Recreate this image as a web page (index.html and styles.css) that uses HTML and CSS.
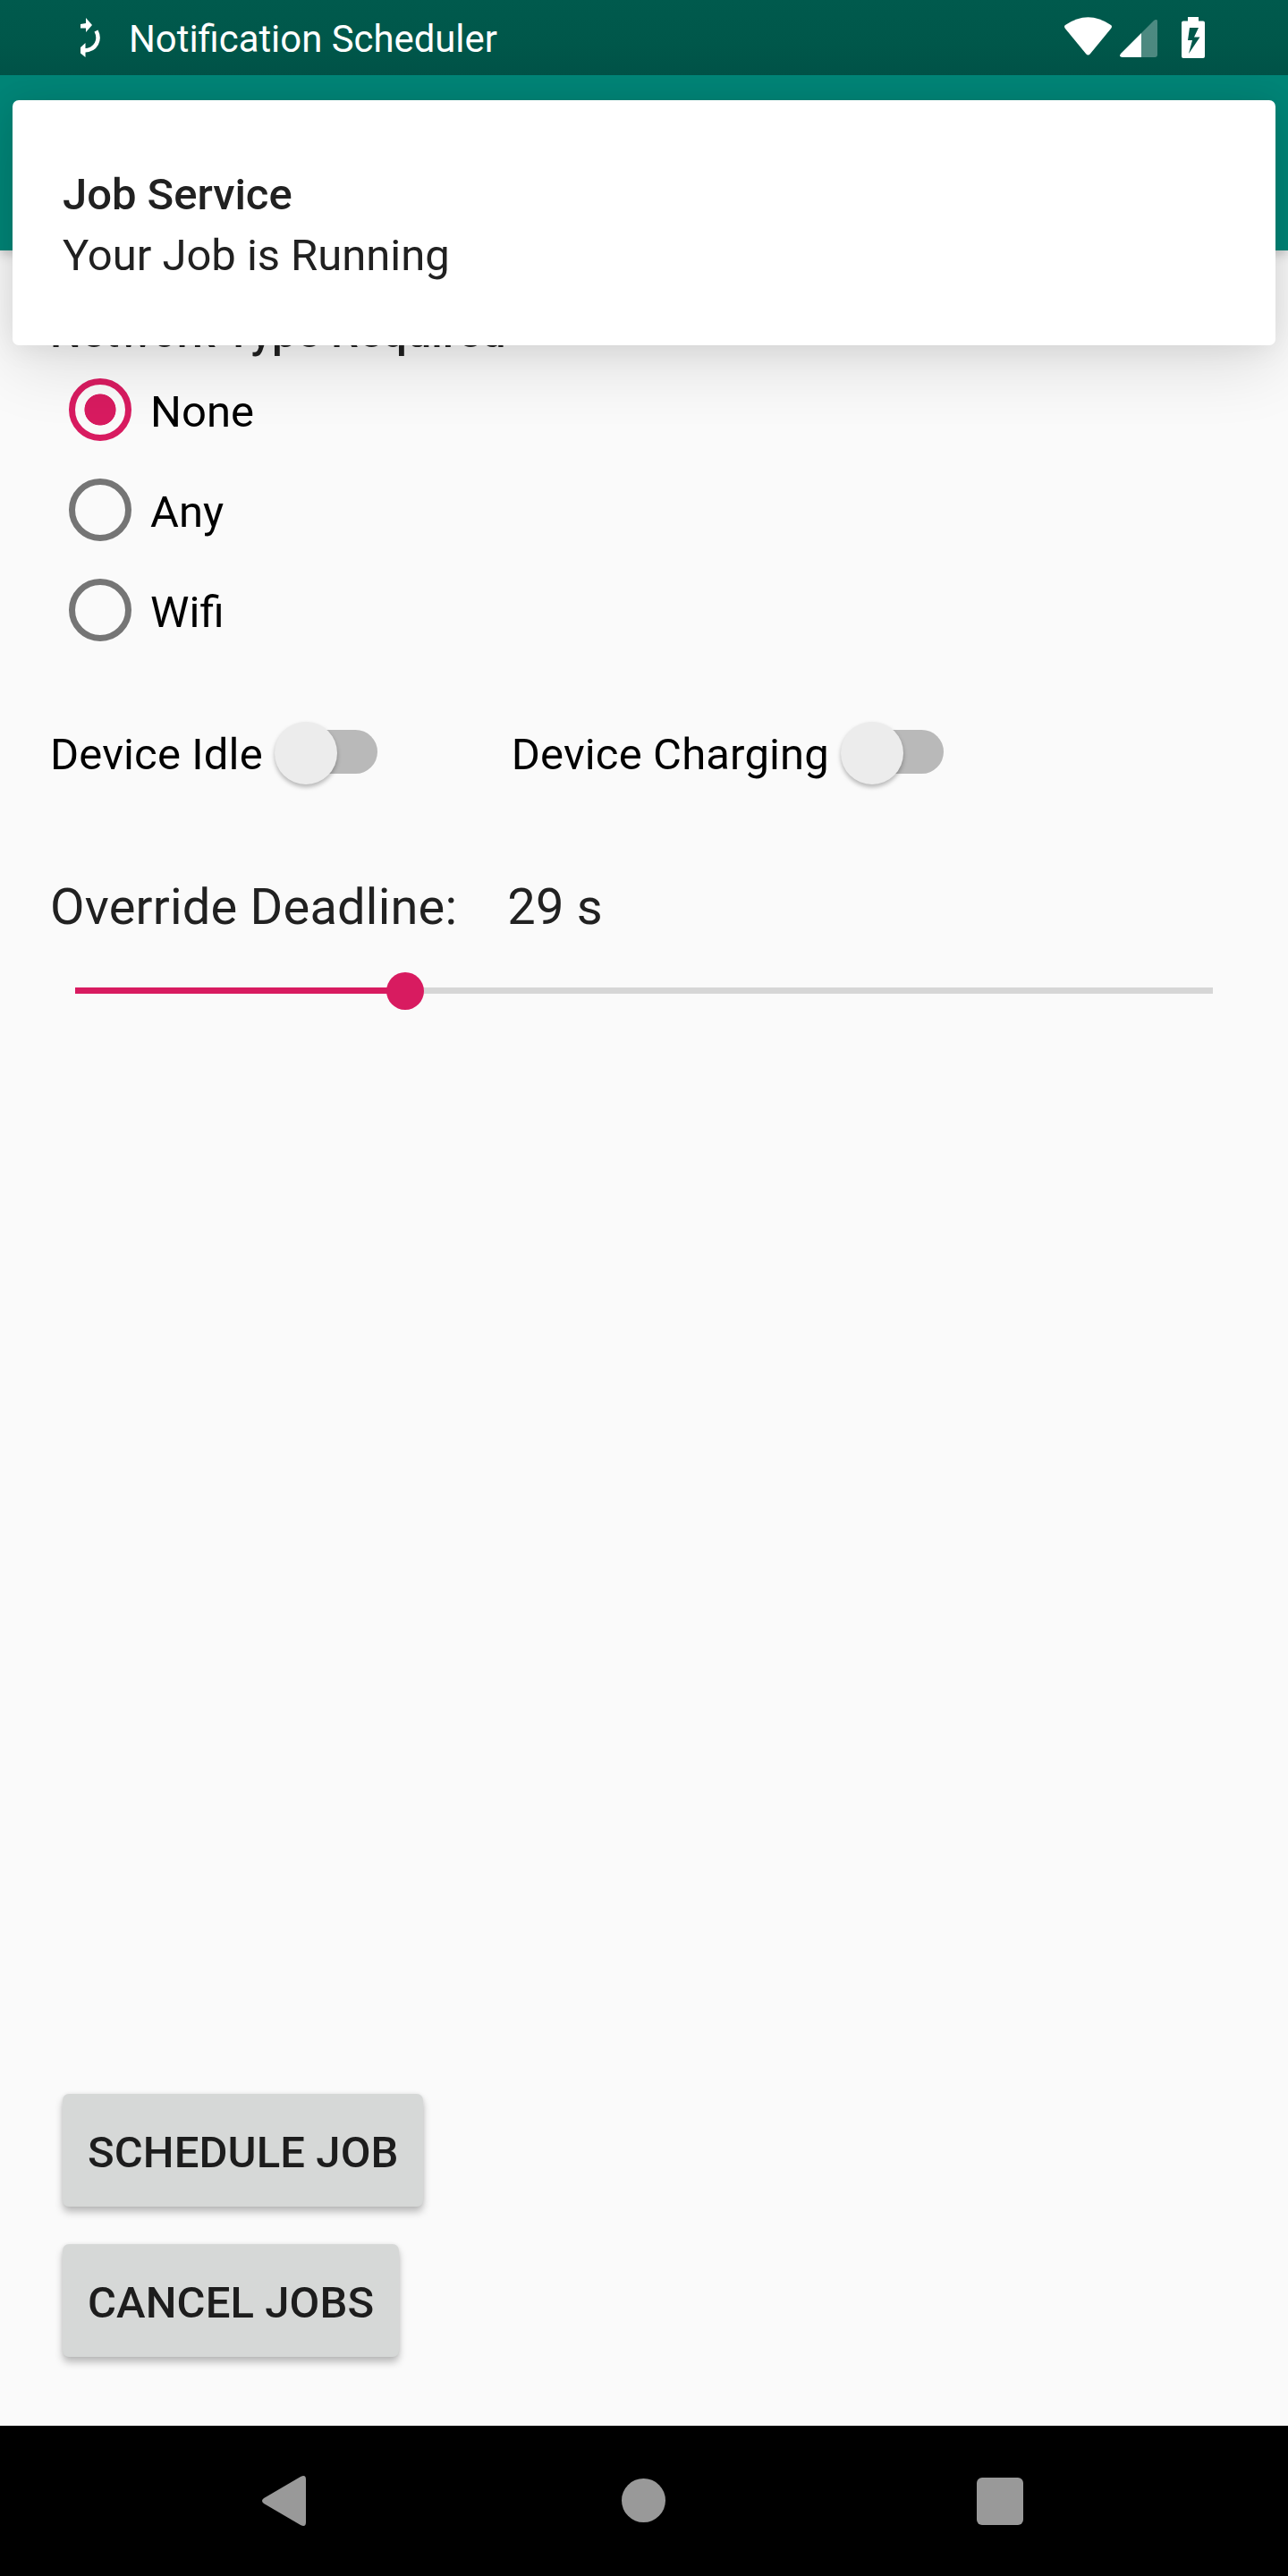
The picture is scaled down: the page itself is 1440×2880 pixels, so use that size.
FILE: index.html
```html
<!DOCTYPE html>
<html lang="en">
<head>
<meta charset="utf-8">
<title>Notification Scheduler</title>
<link rel="stylesheet" href="styles.css">
</head>
<body>
<div class="screen">
  <header class="status-bar">
    <svg class="job-icon" width="24" height="44" viewBox="0 0 24 44"><path d="M0 7 L6 6 V0 L13 8 L6 16 V11.500 L0 11.500 Z M0 33 L5.500 28 V44 L0 39.500 Z" fill="#fff"/><path d="M17.500 14.500 C22.500 24 18 36 4 36.500" fill="none" stroke="#fff" stroke-width="4.500"/></svg>
    <span class="status-title">Notification Scheduler</span>
    <div class="status-icons">
      <svg width="53" height="43" viewBox="0 0 53 43"><path d="M1 9 Q26.500 -8.500 52 9 Q54 10.500 52 13 L29 41 Q26.500 44 24 41 L1 13 Q-1 10.500 1 9 Z" fill="#fff"/></svg>
      <svg class="signal" width="42" height="42" viewBox="0 0 42 42"><path d="M24 15 L38 1 Q42 -1.500 42 2 V39 Q42 42 39 42 H24 Z" fill="#fff" fill-opacity=".3"/><path d="M24 15 V42 H3 Q-1.500 42 1 38 Z" fill="#fff"/></svg>
      <svg class="battery" width="26" height="46" viewBox="0 0 26 46"><path fill-rule="evenodd" d="M7 0 H19 V4.500 H24 Q26 4.500 26 6.500 V44 Q26 46 24 46 H2 Q0 46 0 44 V6.500 Q0 4.500 2 4.500 H7 Z M9 12 L7 26 H12 L8 41 L20.500 22.500 H14 L19 12 Z" fill="#fff"/></svg>
    </div>
  </header>
  <div class="app-bar"></div>
  <main class="content">
    <h2 class="section-title">Network Type Required</h2>
    <div class="radio-group">
      <label class="radio-row"><span class="radio radio-checked"></span><span class="radio-label">None</span></label>
      <label class="radio-row"><span class="radio"></span><span class="radio-label">Any</span></label>
      <label class="radio-row"><span class="radio"></span><span class="radio-label">Wifi</span></label>
    </div>
    <div class="switches">
      <div class="switch-item"><span class="switch-label">Device Idle</span><span class="switch"><span class="thumb"></span></span></div>
      <div class="switch-item"><span class="switch-label">Device Charging</span><span class="switch"><span class="thumb"></span></span></div>
    </div>
    <div class="deadline"><span>Override Deadline:</span><span>29 s</span></div>
    <div class="slider"><span class="slider-fill" style="width: 29%"></span><span class="slider-knob" style="left: 29%"></span></div>
    <div class="actions">
      <button class="button">SCHEDULE JOB</button>
      <button class="button">CANCEL JOBS</button>
    </div>
  </main>
  <nav class="nav-bar">
    <svg width="49" height="58" viewBox="0 0 49 58"><path d="M2 26 L43 2 Q49 -1 49 5 V53 Q49 59 43 56 L2 32 Q-2 29 2 26 Z" fill="#999"/></svg>
    <span class="home"></span>
    <span class="recents"></span>
  </nav>
  <aside class="notification">
    <strong>Job Service</strong>
    <span>Your Job is Running</span>
  </aside>
</div>
</body>
</html>
```
FILE: styles.css
```css
* { box-sizing: border-box; }
body { margin: 0; font-family: Roboto, sans-serif; }
.screen { position: relative; display: flex; flex-direction: column; width: 1440px; height: 2880px; overflow: hidden; background: #fafafa; }
.status-bar { position: relative; z-index: 3; display: flex; align-items: flex-start; height: 84px; padding-left: 90px; background: linear-gradient(#005a4d, #00574a 60%, #005247); color: #fff; }
.job-icon { margin-top: 20px; }
.status-title { margin: 19px 0 0 30px; font-size: 41.850px; line-height: 49px; }
.status-icons { display: flex; margin: 19px 93px 0 auto; }
.signal { margin: 3px 0 0 9px; }
.battery { margin-left: 27px; }
.app-bar { position: relative; z-index: 1; height: 196px; background: #008577; box-shadow: 0 4px 12px rgba(0, 0, 0, .2); }
.content { display: flex; flex: 1; flex-direction: column; padding: 63px 56px 77px; }
.section-title { margin: 0; color: #212121; font-size: 49px; font-weight: 500; line-height: 58px; letter-spacing: .05px; }
.radio-group { margin-top: 1px; }
.radio-row { display: flex; align-items: center; gap: 21px; height: 112px; padding-left: 21px; font-size: 49px; line-height: 58px; }
.radio-label { padding-top: 6px; }
.radio { width: 70px; height: 70px; border: 7px solid #757575; border-radius: 50%; }
.radio-checked { border-color: #d81b60; background: radial-gradient(circle, #d81b60 17.200px, transparent 17.900px); }
.switches { display: flex; gap: 150px; height: 70px; margin-top: 69px; }
.switch-item { display: flex; align-items: center; gap: 13px; font-size: 49px; line-height: 58px; letter-spacing: .15px; }
.switch-label { padding-top: 4px; }
.switch { position: relative; width: 115px; height: 49px; margin-top: -3px; background: linear-gradient(90deg, transparent 35px, #b9b9b9 35px); border-radius: 25px; }
.thumb { position: absolute; left: 0; top: -9px; width: 70px; height: 70px; border-radius: 50%; background: #ececec; box-shadow: 0 3px 5px rgba(0, 0, 0, .28); }
.deadline { display: flex; gap: 56px; margin-top: 104px; color: #212121; font-size: 56px; line-height: 66px; letter-spacing: .2px; }
.slider { position: relative; height: 7px; margin: 57px 28px 0; background: #d6d6d6; }
.slider-fill { display: block; height: 7px; background: #d81b60; }
.slider-knob { position: absolute; top: -17px; width: 42px; height: 42px; margin-left: -20.500px; border-radius: 50%; background: #d81b60; }
.actions { display: flex; flex-direction: column; align-items: flex-start; gap: 42px; margin: auto 14px 0; }
.button { height: 126px; padding: 6px 27.500px 0 28px; border: 0; border-radius: 7px; background: #d6d8d7; color: #1d1d1d; font: 500 49px/58px Roboto, sans-serif; letter-spacing: .1px; box-shadow: 0 6px 9px rgba(0, 0, 0, .25), 0 0 4px rgba(0, 0, 0, .08); }
.nav-bar { display: flex; align-items: center; justify-content: space-between; height: 168px; padding: 0 296px 0 293px; background: #000; }
.home { width: 49px; height: 49px; margin: 0 0 1px 5px; border-radius: 50%; background: #999; }
.recents { width: 52px; height: 53px; border-radius: 6px; background: #999; }
.notification { position: absolute; z-index: 2; left: 14px; top: 112px; display: flex; flex-direction: column; width: 1412px; height: 274px; padding: 77px 56px; border-radius: 7px; background: #fff; color: #212121; font-size: 49px; line-height: 58px; letter-spacing: -.04px; box-shadow: 0 22px 75px rgba(0, 0, 0, .12), 0 2px 32px rgba(0, 0, 0, .08); }
.notification strong { margin-bottom: 10px; font-weight: 500; }
```
